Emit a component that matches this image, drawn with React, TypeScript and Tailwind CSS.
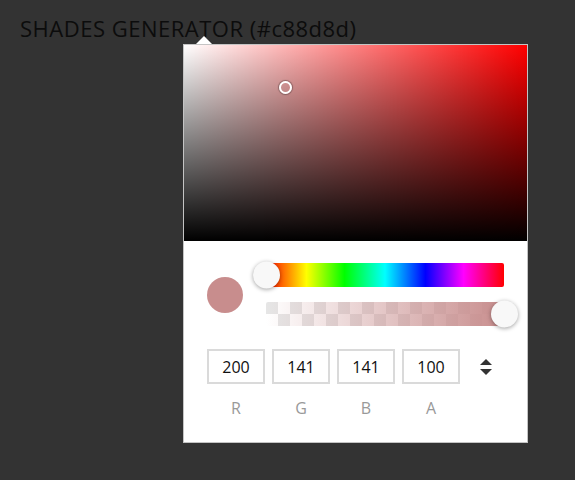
export default function App() {
  const fields = [
    { label: "R", value: "200" },
    { label: "G", value: "141" },
    { label: "B", value: "141" },
    { label: "A", value: "100" },
  ];

  return (
    <main className="min-h-[480px] w-full bg-[#333] pl-5 pt-[13px] font-['Open_Sans','Noto_Sans',sans-serif]">
      <h1 className="text-[22px] leading-[30px] text-[#0c0c0c] tracking-[0.5px]">
        SHADES GENERATOR (#c88d8d)
      </h1>

      {/* picker popover */}
      <div className="relative mt-px ml-[163px] w-[345px] border border-[#c4c4c4] bg-white">
        <div className="absolute -top-[9px] left-3 h-0 w-0 border-x-8 border-b-8 border-x-transparent border-b-white" />

        {/* saturation */}
        <div className="relative h-[196px] w-full bg-[#f00]">
          <div className="h-full w-full bg-linear-to-r from-white to-white/0">
            <div className="h-full w-full bg-linear-to-t from-black to-black/0" />
          </div>
          <div className="absolute left-[95px] top-[36px] h-[13px] w-[13px] rounded-full border-2 border-white shadow-[0_0_1px_1px_rgba(0,0,0,0.3)]" />
        </div>

        <div className="px-[23px] pt-[22px] pb-[23px]">
          <div className="flex items-center gap-[23px]">
            <div className="h-9 w-9 rounded-full bg-[#c88d8d]" />
            <div className="flex flex-col gap-[15px]">
              {/* hue */}
              <div className="relative h-6 w-[238px] rounded-[2px] bg-[linear-gradient(to_right,#f00_0%,#ff0_17%,#0f0_33%,#0ff_50%,#00f_67%,#f0f_83%,#f00_100%)]">
                <div className="absolute -left-[13px] top-1/2 h-[27px] w-[27px] -translate-y-1/2 rounded-full bg-[#f8f8f8] shadow-[0_1px_4px_rgba(0,0,0,0.37)]" />
              </div>
              {/* alpha */}
              <div className="relative h-6 w-[238px] rounded-[2px] bg-[conic-gradient(#fff_25%,#e6e6e6_0_50%,#fff_0_75%,#e6e6e6_0)] bg-size-[24px_24px]">
                <div className="h-full w-full rounded-[2px] bg-linear-to-r from-[rgba(200,141,141,0)] to-[rgb(200,141,141)]" />
                <div className="absolute -right-[14px] top-1/2 h-[27px] w-[27px] -translate-y-1/2 rounded-full bg-[#f8f8f8] shadow-[0_1px_4px_rgba(0,0,0,0.37)]" />
              </div>
            </div>
          </div>

          <div className="mt-[23px] flex items-center">
            <div className="flex gap-[7px]">
              {fields.map((f) => (
                <input
                  key={f.label}
                  readOnly
                  value={f.value}
                  className="h-[35px] w-[58px] border-2 border-[#dadada] bg-white text-center text-[16px] text-[#111] outline-none"
                />
              ))}
            </div>
            <svg className="ml-5" width="12" height="16" viewBox="0 0 12 16">
              <polygon points="0,6 6,0 12,6" fill="#333" />
              <polygon points="0,10 6,16 12,10" fill="#333" />
            </svg>
          </div>

          <div className="mt-[13px] flex gap-[7px]">
            {fields.map((f) => (
              <span key={f.label} className="w-[58px] text-center text-[16px] leading-[22px] text-[#999]">
                {f.label}
              </span>
            ))}
          </div>
        </div>
      </div>
    </main>
  );
}
